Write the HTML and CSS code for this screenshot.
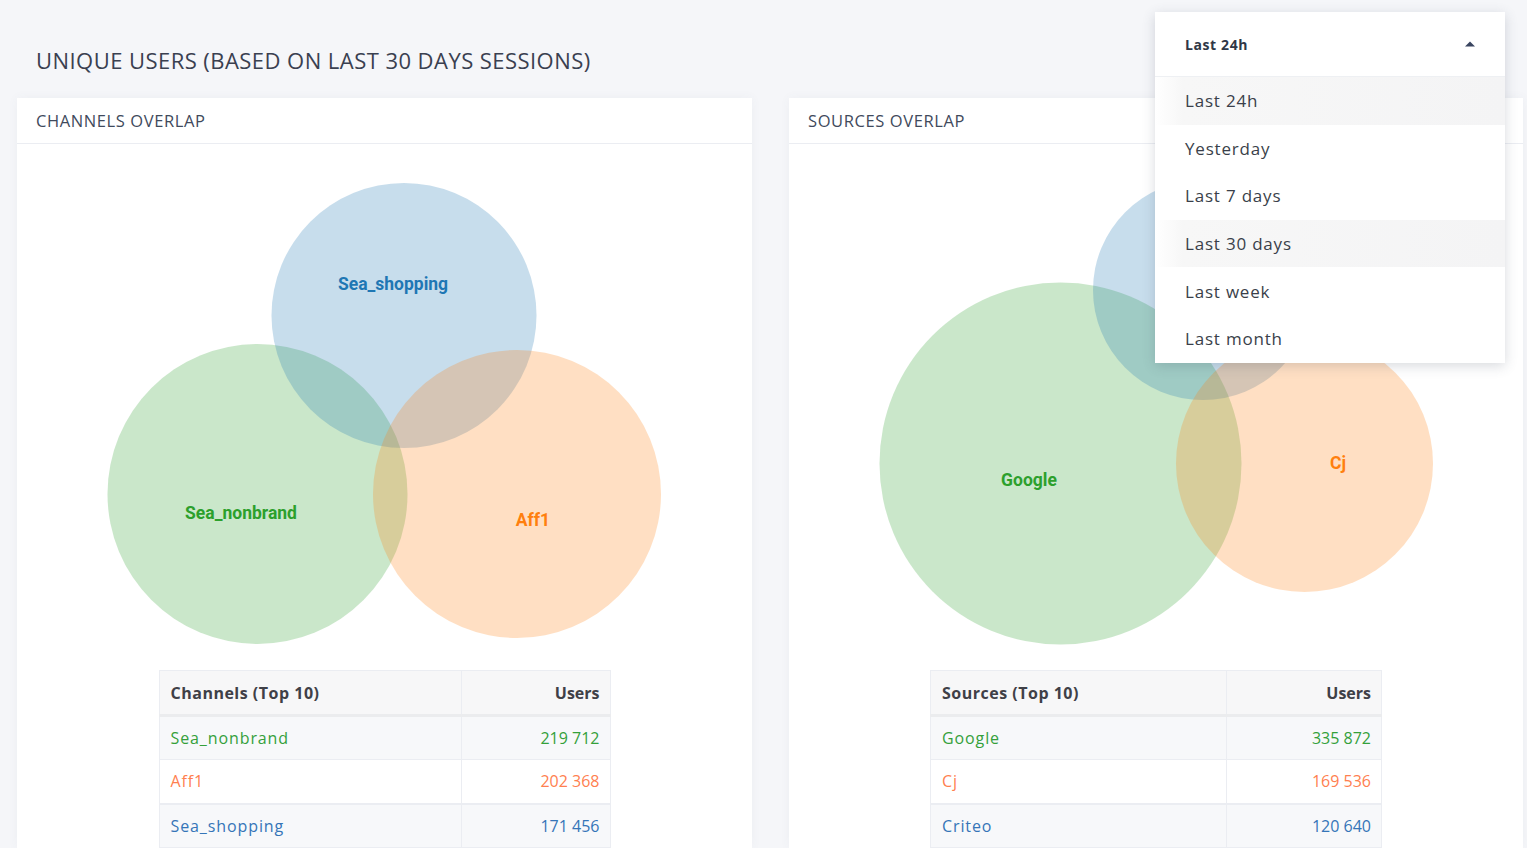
FILE: index.html
```html
<!DOCTYPE html>
<html lang="en">
<head>
<meta charset="utf-8">
<title>Unique users</title>
<link rel="stylesheet" href="styles.css">
</head>
<body>
<div class="page">
  <div class="page-head">
    <h1 class="page-title">UNIQUE USERS (BASED ON LAST 30 DAYS SESSIONS)</h1>
  </div>
  <div class="grid">
    <section class="card">
      <div class="card-head">CHANNELS OVERLAP</div>
      <div class="card-body">
        <svg class="venn" width="735" height="526" viewBox="0 0 735 526">
          <circle cx="240.5" cy="350" r="150" class="c-green"/>
          <circle cx="387" cy="171.5" r="132.5" class="c-blue"/>
          <circle cx="500" cy="350" r="144" class="c-orange"/>
          <text x="376" y="140" class="lbl t-blue">Sea_shopping</text>
          <text x="224" y="369" class="lbl t-green">Sea_nonbrand</text>
          <text x="516" y="376" class="lbl t-orange">Aff1</text>
        </svg>
        <table class="data">
          <thead>
            <tr><th class="name col-ch">Channels (Top 10)</th><th class="num">Users</th></tr>
          </thead>
          <tbody>
            <tr class="odd"><td class="name green">Sea_nonbrand</td><td class="num green">219 712</td></tr>
            <tr class="even"><td class="name orange">Aff1</td><td class="num orange">202 368</td></tr>
            <tr class="odd thick"><td class="name blue">Sea_shopping</td><td class="num blue">171 456</td></tr>
          </tbody>
        </table>
      </div>
    </section>
    <section class="card">
      <div class="card-head">SOURCES OVERLAP</div>
      <div class="card-body">
        <svg class="venn" width="734" height="526" viewBox="0 0 734 526">
          <circle cx="271.5" cy="319.5" r="181" class="c-green"/>
          <circle cx="414" cy="146" r="110" class="c-blue"/>
          <circle cx="515.5" cy="319.5" r="128.5" class="c-orange"/>
          <text x="240" y="336" class="lbl t-green">Google</text>
          <text x="549" y="319" class="lbl t-orange">Cj</text>
        </svg>
        <table class="data">
          <thead>
            <tr><th class="name col-src">Sources (Top 10)</th><th class="num">Users</th></tr>
          </thead>
          <tbody>
            <tr class="odd"><td class="name green">Google</td><td class="num green">335 872</td></tr>
            <tr class="even"><td class="name orange">Cj</td><td class="num orange">169 536</td></tr>
            <tr class="odd thick"><td class="name blue">Criteo</td><td class="num blue">120 640</td></tr>
          </tbody>
        </table>
      </div>
    </section>
  </div>

  <div class="dropdown">
    <div class="dd-head">
      <span class="dd-current">Last 24h</span>
      <svg class="caret" width="10" height="6" viewBox="0 0 10 6"><path d="M0 5.5 L5 0.5 L10 5.5 Z"/></svg>
    </div>
    <ul class="dd-list">
      <li class="dd-item active">Last 24h</li>
      <li class="dd-item">Yesterday</li>
      <li class="dd-item">Last 7 days</li>
      <li class="dd-item active">Last 30 days</li>
      <li class="dd-item">Last week</li>
      <li class="dd-item">Last month</li>
    </ul>
  </div>
</div>
</body>
</html>
```

FILE: styles.css
```css
* { box-sizing: border-box; }

html, body {
  margin: 0;
  padding: 0;
  background: #f5f6f9;
  font-family: "Open Sans", "Liberation Sans", sans-serif;
  color: #3f4047;
}

.page {
  position: relative;
  padding: 0 4px 0 17px;
  height: 848px;
  overflow: hidden;
}

.page-head {
  height: 98px;
  padding: 22px 0 0 19px;
  display: flex;
  align-items: center;
}

.page-title {
  margin: 0;
  font-size: 22px;
  font-weight: 400;
  letter-spacing: 0.45px;
  color: #3a4050;
}

.grid {
  display: grid;
  grid-template-columns: 735px 734px;
  column-gap: 37px;
}

.card {
  background: #fff;
  box-shadow: 0 0 10px rgba(80, 90, 120, 0.05);
}

.card-head {
  height: 46px;
  border-bottom: 1px solid #ebedf2;
  padding: 0 19px;
  display: flex;
  align-items: center;
  font-size: 16.5px;
  color: #3f4a5c;
  letter-spacing: 0.6px;
}

.card-body {
  display: flex;
  flex-direction: column;
  align-items: center;
}

.venn { display: block; }

.c-green { fill: #2ca02c; fill-opacity: 0.25; }
.c-blue { fill: #1f77b4; fill-opacity: 0.25; }
.c-orange { fill: #ff7f0e; fill-opacity: 0.25; }

.lbl {
  font-family: Roboto, "Liberation Sans", sans-serif;
  font-weight: 700;
  font-size: 17.5px;
  text-anchor: middle;
  dominant-baseline: central;
}
.t-green { fill: #2ca02c; }
.t-blue { fill: #1f77b4; }
.t-orange { fill: #ff7f0e; }

.data {
  width: 452px;
  border-collapse: collapse;
  border: 1px solid #ebedf2;
  font-size: 16px;
}

.data th, .data td {
  padding: 0 10px 0 11px;
  border-left: 1px solid #ebedf2;
  border-right: 1px solid #ebedf2;
}

.data .col-ch { width: 302px; }
.data .col-src { width: 296px; }

.data th {
  height: 45px;
  background: #f7f7f8;
  font-weight: 700;
  color: #3f4047;
  border-bottom: 3px solid #ebecee;
}

.data th.name { letter-spacing: 0.5px; }

.data td {
  height: 44px;
  border-top: 1px solid #ebedf2;
}

.data td.name { letter-spacing: 0.9px; }

.data tr.thick td { border-top: 2px solid #ebedf2; }

.data .name { text-align: left; }
.data .num { text-align: right; }

.data tr.odd td { background: #f7f8fa; }
.data tr.even td { background: #fff; }

.green { color: #34a03a; }
.orange { color: #ff7f50; }
.blue { color: #3575b8; }

.dropdown {
  position: absolute;
  left: 1155px;
  top: 12px;
  width: 350px;
  background: #fff;
  box-shadow: 0 3px 12px rgba(60, 70, 90, 0.2);
}

.dd-head {
  height: 65px;
  border-bottom: 1px solid #eef0f3;
  padding: 0 30px 0 30px;
  display: flex;
  align-items: center;
  justify-content: space-between;
}

.dd-current {
  font-size: 14px;
  font-weight: 700;
  letter-spacing: 0.6px;
  color: #2f3746;
}

.caret { fill: #3a4560; display: block; }

.dd-list {
  list-style: none;
  margin: 0;
  padding: 0;
}

.dd-item {
  height: 47.6px;
  padding-left: 30px;
  display: flex;
  align-items: center;
  font-size: 17px;
  letter-spacing: 0.8px;
  color: #3a3f4a;
}

.dd-item.active {
  background: linear-gradient(to right, #ffffff 0%, #f7f7f7 8%, #f4f4f5 100%);
}
```
